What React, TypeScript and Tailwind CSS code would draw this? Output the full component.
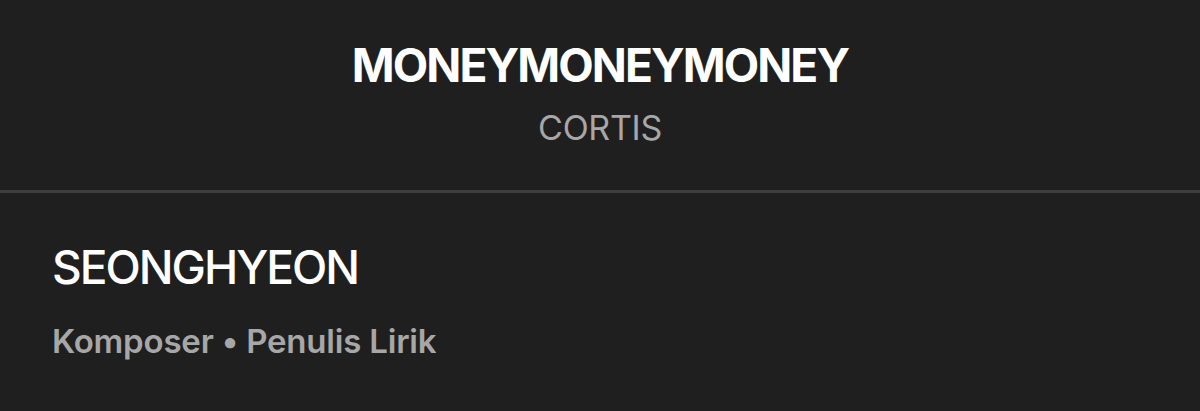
export default function App() {
  return (
    <div className="w-[1200px] h-[411px] bg-[#1f1f1f] text-white font-['Inter',sans-serif] flex flex-col">
      <header className="h-[190px] flex flex-col items-center pt-[38px]">
        <h1 className="text-[46px] leading-[54px] font-bold tracking-[-1.9px]">MONEYMONEYMONEY</h1>
        <p className="mt-[16px] text-[34px] leading-[40px] text-[#a7a7a7] tracking-[-0.3px]">CORTIS</p>
      </header>
      <div className="h-[3px] bg-[#3e3e3e]" />
      <section className="px-[52px] pt-[47px]">
        <h2 className="text-[46px] leading-[54px] font-medium tracking-[-2px]">SEONGHYEON</h2>
        <p className="mt-[28px] text-[33px] leading-[38px] font-semibold text-[#a7a7a7] tracking-[-0.2px]">Komposer • Penulis Lirik</p>
      </section>
    </div>
  );
}
